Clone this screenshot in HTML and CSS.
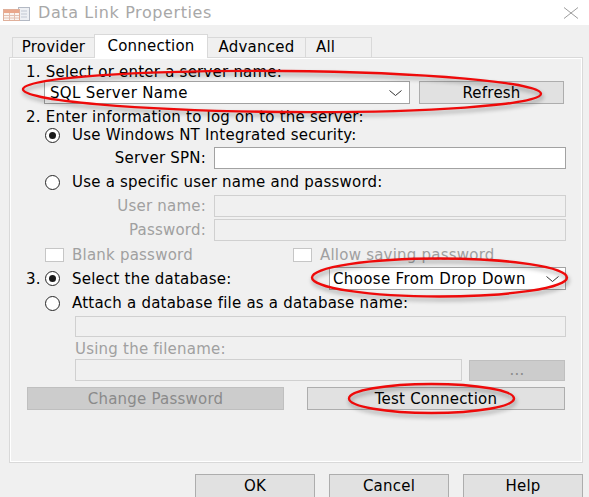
FILE: index.html
```html
<!DOCTYPE html>
<html>
<head>
<meta charset="utf-8">
<title>Data Link Properties</title>
<link rel="stylesheet" href="styles.css">
</head>
<body>
<div class="window">
  <div class="titlebar">
    <svg class="app-icon" viewBox="0 0 28 16" width="28" height="16">
      <rect x="15.5" y="1.5" width="11" height="13" fill="#eef0f4" stroke="#b3b9c4"/>
      <line x1="18" y1="5" x2="24" y2="5" stroke="#c2c8d3"/>
      <line x1="18" y1="8" x2="24" y2="8" stroke="#c2c8d3"/>
      <line x1="18" y1="11" x2="24" y2="11" stroke="#c2c8d3"/>
      <rect x="0.5" y="3.5" width="16" height="11" fill="#fbf5f1" stroke="#e0b09b"/>
      <rect x="1" y="4" width="15" height="3" fill="#eaa88c"/>
      <line x1="1" y1="9.5" x2="16" y2="9.5" stroke="#e2c0b2"/>
      <line x1="1" y1="12" x2="16" y2="12" stroke="#e2c0b2"/>
      <line x1="6.5" y1="7" x2="6.5" y2="14" stroke="#e2c0b2"/>
      <line x1="11.5" y1="7" x2="11.5" y2="14" stroke="#e2c0b2"/>
    </svg>
    <span class="title">Data Link Properties</span>
    <svg class="close" viewBox="0 0 16 12" width="16" height="12">
      <path d="M1 0.5 L15 11.5 M15 0.5 L1 11.5" stroke="#9c9c9c" stroke-width="1" fill="none"/>
    </svg>
  </div>

  <div class="client">
    <div class="tabs">
      <div class="tab tab-provider">Provider</div>
      <div class="tab tab-connection active">Connection</div>
      <div class="tab tab-advanced">Advanced</div>
      <div class="tab tab-all">All</div>
    </div>

    <div class="panel">
      <div class="row label-row r-step1">1. Select or enter a server name:</div>
      <div class="row combo-row">
        <div class="combo combo-server">
          <span class="combo-text">SQL Server Name</span>
          <svg class="chev" viewBox="0 0 13 6" width="13" height="6"><path d="M0.5 0.5 L6.5 5.5 L12.5 0.5" stroke="#333" fill="none"/></svg>
        </div>
        <button class="btn btn-refresh">Refresh</button>
      </div>

      <div class="row label-row r-step2">2. Enter information to log on to the server:</div>
      <div class="row radio-row indent"><span class="radio on"></span><span class="rtext">Use Windows NT Integrated security:</span></div>
      <div class="row field-row r-spn"><span class="flabel">Server SPN:</span><input class="tbox" type="text"></div>
      <div class="row radio-row indent r-gap4"><span class="radio"></span><span class="rtext">Use a specific user name and password:</span></div>
      <div class="row field-row r-user"><span class="flabel disabled">User name:</span><input class="tbox off" type="text" disabled></div>
      <div class="row field-row r-pwd"><span class="flabel disabled">Password:</span><input class="tbox off" type="password" disabled></div>
      <div class="row check-row">
        <div class="check-item first"><span class="cbox"></span><span class="ctext">Blank password</span></div>
        <div class="check-item"><span class="cbox"></span><span class="ctext">Allow saving password</span></div>
      </div>

      <div class="row db-row">
        <span class="num">3.</span><span class="radio on"></span><span class="rtext">Select the database:</span>
        <div class="combo combo-db">
          <span class="combo-text">Choose From Drop Down</span>
          <svg class="chev" viewBox="0 0 13 6" width="13" height="6"><path d="M0.5 0.5 L6.5 5.5 L12.5 0.5" stroke="#333" fill="none"/></svg>
        </div>
      </div>
      <div class="row radio-row indent r-gap4"><span class="radio"></span><span class="rtext">Attach a database file as a database name:</span></div>
      <input class="tbox off attach" type="text" disabled>
      <div class="row label-row using disabled">Using the filename:</div>
      <div class="row file-row">
        <input class="tbox off" type="text" disabled>
        <button class="btn btn-off btn-browse" disabled>...</button>
      </div>
      <div class="row action-row">
        <button class="btn btn-off" disabled>Change Password</button>
        <button class="btn">Test Connection</button>
      </div>
    </div>

    <div class="footer">
      <button class="btn btn-dlg">OK</button>
      <button class="btn btn-dlg">Cancel</button>
      <button class="btn btn-dlg">Help</button>
    </div>
  </div>

  <svg class="annot" viewBox="0 0 589 497" width="589" height="497">
    <g fill="none" stroke="#ee0a0a" stroke-width="2.4">
      <ellipse cx="282" cy="91.5" rx="259" ry="20.5" transform="rotate(0.5 282 91.5)"/>
      <ellipse cx="439.5" cy="277.5" rx="127.5" ry="19"/>
      <ellipse cx="431.5" cy="398.5" rx="82.5" ry="14.5"/>
    </g>
  </svg>
</div>
</body>
</html>
```

FILE: styles.css
```css
* { box-sizing: border-box; }

html, body {
  margin: 0;
  padding: 0;
}

body {
  width: 589px;
  height: 497px;
  overflow: hidden;
  background: #f0f0f0;
  font-family: "DejaVu Sans", sans-serif;
  font-size: 15px;
  letter-spacing: 0.22px;
  color: #000;
}

.window {
  position: relative;
  width: 589px;
  height: 497px;
  background: #f0f0f0;
}

/* Title bar */
.titlebar {
  height: 25px;
  background: #fff;
  display: flex;
  align-items: center;
}

.app-icon {
  margin-left: 3px;
  margin-top: 2px;
  flex: none;
}

.title {
  margin-left: 7px;
  color: #a8a8a8;
  font-size: 16px;
  letter-spacing: 0.6px;
}

.close {
  margin-left: auto;
  margin-right: 10px;
  flex: none;
}

/* Client area */
.client {
  padding: 9px 6px 0 9px;
}

.tabs {
  display: flex;
  align-items: flex-end;
  height: 23px;
  margin-left: 3px;
  position: relative;
  z-index: 1;
}

.tab {
  height: 20px;
  line-height: 19px;
  border: 1px solid #d9d9d9;
  border-bottom: none;
  background: #f0f0f0;
  text-align: center;
  margin-right: -1px;
  white-space: nowrap;
}

.tab.active {
  height: 24px;
  line-height: 22px;
  margin-bottom: -1px;
  background: #fff;
}

.tab-provider { width: 83px; }
.tab-connection { width: 114px; }
.tab-advanced { width: 99px; }
.tab-all { width: 67px; text-align: left; padding-left: 10px; }

.panel {
  height: 406px;
  border: 1px solid #d9d9d9;
  box-shadow: inset 0 0 0 1px #fff;
  padding: 5px 16px 0;
  display: flex;
  flex-direction: column;
}

.row {
  display: flex;
  align-items: center;
  white-space: nowrap;
  flex: none;
}

.label-row { height: 18px; }
.r-step2 { margin-top: 4px; }

.disabled { color: #a0a0a0; }

/* Combo boxes */
.combo-row { height: 23px; }

.combo {
  height: 23px;
  background: #fff;
  border: 1px solid #a2a2a2;
  display: flex;
  align-items: center;
  padding-left: 5px;
  padding-right: 7px;
}

.combo-text { flex: 1; letter-spacing: 0.35px; }

.chev { flex: none; }

.combo-server {
  width: 366px;
  margin-left: 18px;
}

.combo-db {
  width: 237px;
  margin-left: auto;
  height: 23px;
  padding-left: 3px;
  padding-right: 6px;
}

/* Buttons */
.btn {
  font-family: inherit;
  font-size: 15px;
  letter-spacing: 0.22px;
  color: #000;
  background: #e1e1e1;
  border: 1px solid #adadad;
  padding: 0;
  margin: 0;
  height: 23px;
}

.btn-refresh {
  width: 145px;
  margin-left: 9px;
}

.btn-off {
  background: #cccccc;
  border-color: #bfbfbf;
  color: #8a8a8a;
}

/* Radios */
.radio-row { height: 18px; }
.indent { padding-left: 19px; }
.r-gap4 { margin-top: 4px; }

.radio {
  width: 15px;
  height: 15px;
  border-radius: 50%;
  border: 1px solid #262626;
  background: #fff;
  flex: none;
  display: flex;
  align-items: center;
  justify-content: center;
}

.radio.on::after {
  content: "";
  width: 7px;
  height: 7px;
  border-radius: 50%;
  background: #1a1a1a;
}

.rtext { margin-left: 12px; }

/* Labelled text fields */
.field-row { height: 22px; }
.r-spn { margin-top: 3px; }
.r-user { margin-top: 4px; }
.r-pwd { margin-top: 2px; }

.flabel {
  width: 181px;
  text-align: right;
  padding-right: 1px;
  flex: none;
}

.tbox {
  height: 22px;
  flex: 1;
  min-width: 0;
  margin: 0 0 0 7px;
  border: 1px solid #a2a2a2;
  background: #fff;
  font-family: inherit;
  font-size: 15px;
  padding: 0 3px;
  outline: none;
}

.tbox.off {
  background: #f0f0f0;
  border-color: #d0d0d0;
}

/* Checkboxes */
.check-row {
  height: 18px;
  margin-top: 5px;
}

.check-item {
  display: flex;
  align-items: center;
  color: #a0a0a0;
}

.check-item.first {
  width: 267px;
  padding-left: 19px;
}

.cbox {
  width: 19px;
  height: 14px;
  border: 1px solid #c6c6c6;
  background: #fff;
  flex: none;
}

.ctext { margin-left: 8px; }

/* Database selection */
.db-row {
  height: 23px;
  margin-top: 3px;
}

.num {
  width: 19px;
  flex: none;
}

.attach {
  flex: none;
  height: 21px;
  margin: 4px 0 0 49px;
}

.using {
  margin-top: 3px;
  padding-left: 49px;
}

.file-row {
  height: 22px;
  margin-top: 1px;
  padding-left: 42px;
}

.file-row .tbox { height: 22px; }

.btn-browse {
  width: 96px;
  height: 21px;
  margin-left: 7px;
  margin-right: 1px;
}

.action-row {
  height: 23px;
  margin-top: 6px;
  display: grid;
  grid-template-columns: 257px 258px;
  column-gap: 23px;
  padding-left: 1px;
}

/* Dialog buttons */
.footer {
  display: flex;
  justify-content: flex-end;
  gap: 14px;
  margin-top: 11px;
}

.btn-dlg {
  width: 120px;
  height: 26px;
  padding-bottom: 2px;
}

/* Annotation overlay (red ellipses drawn over the screenshot) */
.annot {
  position: absolute;
  left: 0;
  top: 0;
  pointer-events: none;
  filter: drop-shadow(1px 3px 2px rgba(0, 0, 0, 0.35));
}
```
